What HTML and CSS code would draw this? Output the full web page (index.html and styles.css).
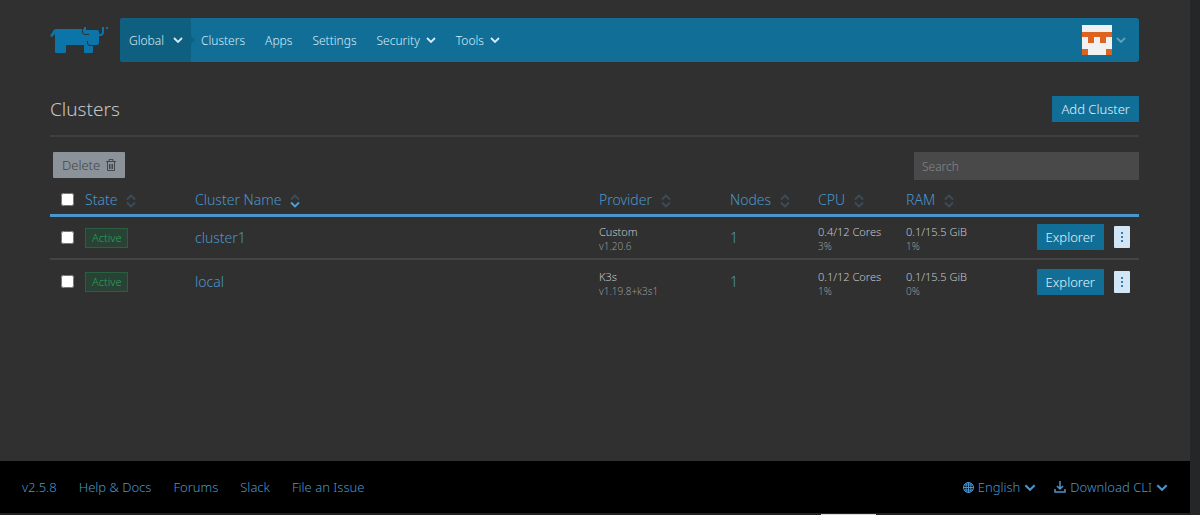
FILE: index.html
```html
<!DOCTYPE html>
<html lang="en">
<head>
  <meta charset="UTF-8">
  <meta name="viewport" content="width=device-width, initial-scale=1.0">
  <title>Clusters</title>
  <link rel="stylesheet" href="styles.css">
</head>
<body>
  <svg class="sprite" aria-hidden="true">
    <symbol id="chevron" viewBox="0 0 10 6"><path d="M1 1l4 4 4-4" fill="none" stroke="currentColor" stroke-width="1.8"/></symbol>
    <symbol id="sort" viewBox="0 0 10 14">
      <path class="sort-up" d="M1 5.5l4-4 4 4" fill="none" stroke-width="1.8"/>
      <path class="sort-down" d="M1 8.5l4 4 4-4" fill="none" stroke-width="1.8"/>
    </symbol>
    <symbol id="dots" viewBox="0 0 4 12"><path d="M1 1h2v2H1zM1 5h2v2H1zM1 9h2v2H1z" fill="currentColor"/></symbol>
  </svg>

  <div class="page">
    <header class="header">
      <a class="logo" href="#" aria-label="Home">
        <svg width="59" height="28" viewBox="0 0 59 28">
          <path fill="#0b74a8" d="M6 3h28V1h2v3h11q2 0 2 2v2q3 0 3-2V1h2v5q0 4-4 4h-1v7q0 2-2 2h-4v7q0 1-1 1h-7q-1 0-1-1v-7H16v7q0 1-1 1H6q-1 0-1-1V8l-3 3-2-1 3-5q1-2 3-2z"/>
          <path fill="none" stroke="#303030" d="M32.500 2v4q0 2.500 2.500 2.500h4M37.500 15v2q0 2.500 2.500 2.500h4"/>
          <path fill="#0b74a8" d="M56 1h2v2h-2z"/>
        </svg>
      </a>
      <nav class="nav">
        <button class="nav-item active" type="button">Global <svg class="chevron"><use href="#chevron"/></svg></button>
        <a class="nav-item" href="#">Clusters</a>
        <a class="nav-item" href="#">Apps</a>
        <a class="nav-item" href="#">Settings</a>
        <button class="nav-item" type="button">Security <svg class="chevron"><use href="#chevron"/></svg></button>
        <button class="nav-item" type="button">Tools <svg class="chevron"><use href="#chevron"/></svg></button>
        <button class="user" type="button" aria-label="User menu">
          <svg class="avatar" viewBox="0 0 30 30">
            <path fill="#f1f1f1" d="M0 0h30v30H0z"/>
            <path fill="#dc6423" d="M0 7h30v5h-6v6h-6v-6h-6v6H6v-6H0zM0 24h6v6H0zM24 24h6v6h-6z"/>
          </svg>
          <svg class="chevron"><use href="#chevron"/></svg>
        </button>
      </nav>
    </header>

    <main class="main">
      <div class="title-row">
        <h1>Clusters</h1>
        <button class="btn" type="button">Add Cluster</button>
      </div>

      <div class="toolbar">
        <button class="btn btn-delete" type="button" disabled>Delete
          <svg width="10" height="12" viewBox="0 0 10 12" fill="none" stroke="currentColor">
            <path d="M0 2.5h10M3 2V.5h4V2M1.5 3v8.5h7V3M3.5 5v5M5 5v5M6.5 5v5"/>
          </svg>
        </button>
        <input class="search" type="search" placeholder="Search" aria-label="Search">
      </div>

      <table class="clusters">
        <colgroup>
          <col class="col-check"><col class="col-state"><col><col class="col-provider">
          <col class="col-nodes"><col class="col-cpu"><col class="col-actions">
        </colgroup>
        <thead>
          <tr>
            <th><input type="checkbox" aria-label="Select all"></th>
            <th>State <svg class="sort"><use href="#sort"/></svg></th>
            <th>Cluster Name <svg class="sort sorted"><use href="#sort"/></svg></th>
            <th>Provider <svg class="sort"><use href="#sort"/></svg></th>
            <th>Nodes <svg class="sort"><use href="#sort"/></svg></th>
            <th>CPU <svg class="sort"><use href="#sort"/></svg></th>
            <th>RAM <svg class="sort"><use href="#sort"/></svg></th>
          </tr>
        </thead>
        <tbody>
          <tr>
            <td><input type="checkbox" aria-label="Select cluster1"></td>
            <td><span class="badge">Active</span></td>
            <td><a href="#">cluster1</a></td>
            <td class="detail">Custom<small>v1.20.6</small></td>
            <td><a href="#">1</a></td>
            <td class="detail">0.4/12 Cores<small>3%</small></td>
            <td>
              <div class="last-cell">
                <div class="detail">0.1/15.5 GiB<small>1%</small></div>
                <button class="btn" type="button">Explorer</button>
                <button class="more" type="button" aria-label="Actions"><svg><use href="#dots"/></svg></button>
              </div>
            </td>
          </tr>
          <tr>
            <td><input type="checkbox" aria-label="Select local"></td>
            <td><span class="badge">Active</span></td>
            <td><a href="#">local</a></td>
            <td class="detail">K3s<small>v1.19.8+k3s1</small></td>
            <td><a href="#">1</a></td>
            <td class="detail">0.1/12 Cores<small>1%</small></td>
            <td>
              <div class="last-cell">
                <div class="detail">0.1/15.5 GiB<small>0%</small></div>
                <button class="btn" type="button">Explorer</button>
                <button class="more" type="button" aria-label="Actions"><svg><use href="#dots"/></svg></button>
              </div>
            </td>
          </tr>
        </tbody>
      </table>
    </main>

    <footer class="footer">
      <div class="footer-links">
        <a href="#">v2.5.8</a>
        <a href="#">Help &amp; Docs</a>
        <a href="#">Forums</a>
        <a href="#">Slack</a>
        <a href="#">File an Issue</a>
      </div>
      <div class="footer-menus">
        <button class="footer-menu" type="button">
          <svg width="11" height="11" viewBox="0 0 11 11" fill="none" stroke="currentColor">
            <circle cx="5.5" cy="5.5" r="5"/><ellipse cx="5.5" cy="5.5" rx="2.5" ry="5"/><path d="M5.5 0v11M0 5.5h11M1 3h9M1 8h9"/>
          </svg>
          English <svg class="chevron"><use href="#chevron"/></svg>
        </button>
        <button class="footer-menu" type="button">
          <svg width="12" height="12" viewBox="0 0 12 12" fill="none" stroke="currentColor" stroke-width="1.5">
            <path d="M6 0v8M3 5l3 3 3-3M1 8v3h10V8"/>
          </svg>
          Download CLI <svg class="chevron"><use href="#chevron"/></svg>
        </button>
      </div>
    </footer>
    <div class="bottom-edge"><span></span></div>
  </div>
</body>
</html>
```
FILE: styles.css
```css
* {
  box-sizing: border-box;
}
body {
  margin: 0;
  font-family: 'Noto Sans', 'Open Sans', sans-serif;
  font-weight: 300;
  font-size: 14px;
  background: #303030;
  color: #c5c6c8;
}
a {
  color: #4a95cb;
  text-decoration: none;
}
button {
  font: inherit;
  border: none;
  cursor: pointer;
}
.sprite {
  position: absolute;
  width: 0;
  height: 0;
}
.page {
  display: flex;
  flex-direction: column;
  min-height: 100vh;
  border-right: 10px solid #252628;
}

/* header */
.header {
  display: flex;
  align-items: center;
  gap: 11px;
  padding: 18px 51px 0 50px;
}
.logo svg {
  display: block;
}
.nav {
  flex: 1;
  display: flex;
  height: 44px;
  background: #116f97;
  border-radius: 3px;
  overflow: hidden;
}
.nav-item {
  display: flex;
  align-items: center;
  gap: 6px;
  padding: 0 10px;
  background: none;
  color: #d3ecf8;
  font-size: 12px;
}
.nav-item.active {
  position: relative;
  gap: 9px;
  padding: 0 8px 0 9px;
  background: #0f5f80;
}
.nav-item.active::after {
  content: "";
  position: absolute;
  left: 100%;
  top: 18px;
  border: 4px solid transparent;
  border-left-color: #0f5f80;
}
.chevron {
  width: 10px;
  height: 6px;
}
.user {
  display: flex;
  align-items: center;
  gap: 4px;
  margin-left: auto;
  padding: 0 13px;
  background: none;
  color: #5fa0bd;
}
.avatar {
  width: 30px;
  height: 30px;
}

/* content */
.main {
  flex: 1;
  padding: 34px 51px 20px 50px;
}
.title-row {
  display: flex;
  align-items: center;
  justify-content: space-between;
  padding-bottom: 13px;
  border-bottom: 2px solid #3d3f40;
}
h1 {
  margin: 0;
  font-size: 19px;
  line-height: 26px;
  font-weight: 300;
}
.btn {
  height: 26px;
  padding: 0 9px;
  background: #116f97;
  color: #e3f2fa;
  font-size: 13px;
  border-radius: 1px;
}
.btn-delete {
  display: flex;
  align-items: center;
  gap: 6px;
  margin-left: 3px;
  background: #8b9299;
  color: #41464b;
}
.toolbar {
  display: flex;
  justify-content: space-between;
  padding-top: 15px;
}
.search {
  width: 225px;
  height: 28px;
  padding: 0 8px;
  border: none;
  background: #494949;
  color: #c5c6c8;
  font: inherit;
  font-size: 12px;
}
.search::placeholder {
  color: #85878a;
}

/* table */
.clusters {
  width: 100%;
  margin-top: 4px;
  table-layout: fixed;
  border-collapse: collapse;
}
.col-check {
  width: 35px;
}
.col-state {
  width: 110px;
}
.col-provider {
  width: 131px;
}
.col-nodes,
.col-cpu {
  width: 88px;
}
.col-actions {
  width: 233px;
}
th,
td {
  padding: 0;
  text-align: left;
  vertical-align: middle;
}
th {
  height: 31px;
  padding-top: 2px;
  color: #4a95cb;
  font-weight: 300;
  border-bottom: 3px solid #4a95cb;
}
td {
  height: 44px;
  border-bottom: 2px solid #424446;
}
td.detail,
.last-cell .detail {
  padding-top: 4px;
}
tbody tr:last-child td {
  border-bottom: none;
}
input[type="checkbox"] {
  display: block;
  width: 13px;
  height: 13px;
  margin: 0 0 0 11px;
}
.sort {
  width: 10px;
  height: 14px;
  margin-left: 5px;
  vertical-align: -3px;
  stroke: #3c4d5a;
}
.sorted {
  --down: #4aa3df;
}
.sort-down {
  stroke: var(--down, #3c4d5a);
}
.badge {
  display: inline-block;
  padding: 0 6px;
  border: 1px solid #2a6040;
  background: #284236;
  color: #2fa35a;
  font-size: 11px;
  line-height: 18px;
}
.detail {
  font-size: 11px;
  line-height: 14px;
}
.detail small {
  display: block;
  color: #96989b;
  font-size: 10px;
}
.last-cell {
  display: flex;
  align-items: center;
  gap: 10px;
  padding-right: 9px;
}
.last-cell .detail {
  margin-right: auto;
}
.more {
  display: flex;
  align-items: center;
  justify-content: center;
  width: 16px;
  height: 22px;
  padding: 0;
  background: #d2e6f5;
  color: #2f80b4;
  border-radius: 1px;
}
.more svg {
  width: 4px;
  height: 12px;
}

/* footer */
.footer {
  display: flex;
  align-items: center;
  justify-content: space-between;
  height: 52px;
  padding: 0 22px;
  background: #000;
  font-size: 13px;
}
.footer-links {
  display: flex;
  gap: 22px;
}
.footer-menus {
  display: flex;
  gap: 18px;
}
.footer-menu {
  display: flex;
  align-items: center;
  gap: 4px;
  padding: 0;
  background: none;
  color: #4a95cb;
}
.footer-menu .chevron {
  width: 12px;
  height: 7px;
}
.bottom-edge {
  height: 2px;
  padding-top: 1px;
  background: #1e2224;
}
.bottom-edge span {
  display: block;
  width: 55px;
  height: 1px;
  margin-left: 69%;
  background: #d5d8d8;
}
```
